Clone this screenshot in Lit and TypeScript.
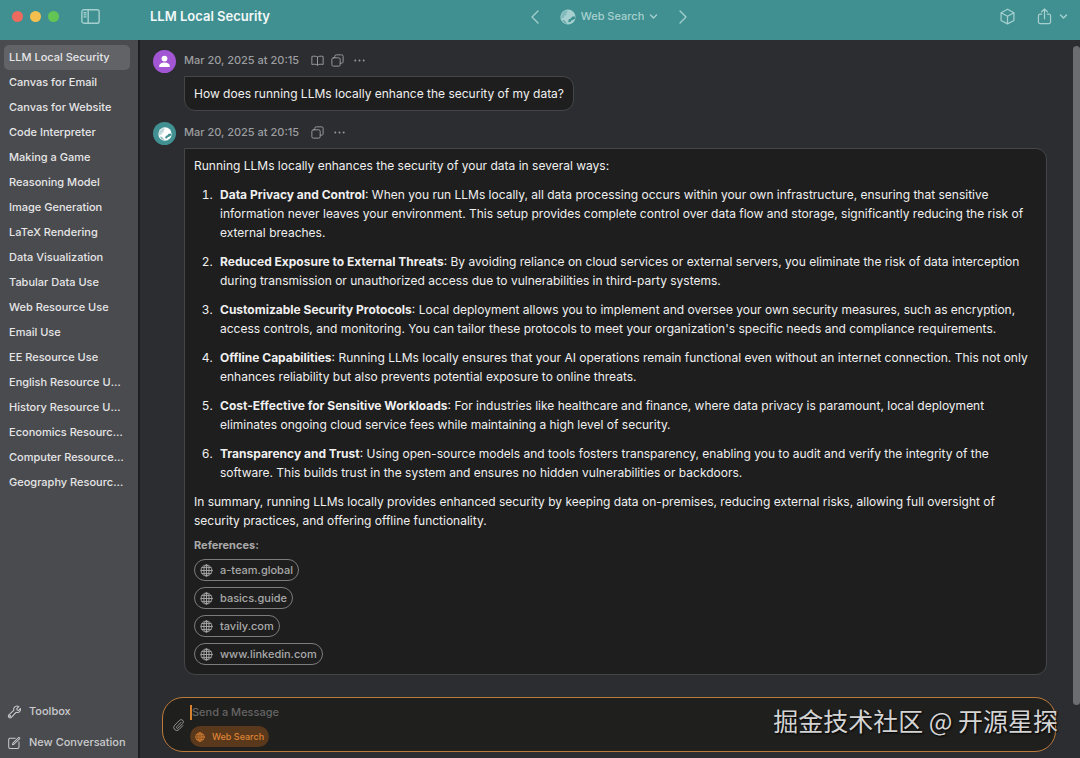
import { LitElement, html, css, svg, nothing } from "lit";
import { customElement, property, state } from "lit/decorators.js";
import { classMap } from "lit/directives/class-map.js";

const CHATS = [
  "LLM Local Security",
  "Canvas for Email",
  "Canvas for Website",
  "Code Interpreter",
  "Making a Game",
  "Reasoning Model",
  "Image Generation",
  "LaTeX Rendering",
  "Data Visualization",
  "Tabular Data Use",
  "Web Resource Use",
  "Email Use",
  "EE Resource Use",
  "English Resource Usage",
  "History Resource Usage",
  "Economics Resource Usage",
  "Computer Resource Usage",
  "Geography Resource Usage",
];

const POINTS = [
  {
    title: "Data Privacy and Control",
    text: "When you run LLMs locally, all data processing occurs within your own infrastructure, ensuring that sensitive information never leaves your environment. This setup provides complete control over data flow and storage, significantly reducing the risk of external breaches.",
  },
  {
    title: "Reduced Exposure to External Threats",
    text: "By avoiding reliance on cloud services or external servers, you eliminate the risk of data interception during transmission or unauthorized access due to vulnerabilities in third-party systems.",
  },
  {
    title: "Customizable Security Protocols",
    text: "Local deployment allows you to implement and oversee your own security measures, such as encryption, access controls, and monitoring. You can tailor these protocols to meet your organization's specific needs and compliance requirements.",
  },
  {
    title: "Offline Capabilities",
    text: "Running LLMs locally ensures that your AI operations remain functional even without an internet connection. This not only enhances reliability but also prevents potential exposure to online threats.",
  },
  {
    title: "Cost-Effective for Sensitive Workloads",
    text: "For industries like healthcare and finance, where data privacy is paramount, local deployment eliminates ongoing cloud service fees while maintaining a high level of security.",
  },
  {
    title: "Transparency and Trust",
    text: "Using open-source models and tools fosters transparency, enabling you to audit and verify the integrity of the software. This builds trust in the system and ensures no hidden vulnerabilities or backdoors.",
  },
];

const REFERENCES = ["a-team.global", "basics.guide", "tavily.com", "www.linkedin.com"];

const GLYPHS = {
  sidebar: svg`<rect x=".8" y="2.600" width="16.400" height="12.800" rx="2"/><path d="M6.800 2.600v12.800M2.900 5.400h1.900M2.900 7.400h1.900M2.900 9.400h1.900"/>`,
  left: svg`<path d="M12 3 6 9l6 6"/>`,
  right: svg`<path d="m6 3 6 6-6 6"/>`,
  down: svg`<path stroke-width="2.800" d="m3 6 6 6 6-6"/>`,
  cube: svg`<path d="M9 1.300 15.800 5v8.200L9 16.800 2.200 13.200V5zM2.200 5 9 8.800 15.800 5M9 8.800v8"/>`,
  share: svg`<path d="M6 6.500H4.200a1.600 1.600 0 0 0-1.600 1.600v6.800a1.600 1.600 0 0 0 1.600 1.600h9.600a1.600 1.600 0 0 0 1.600-1.600V8.100a1.600 1.600 0 0 0-1.600-1.600H12M9 11.500V1.300M6 4l3-2.900L12 4"/>`,
  book: svg`<path d="M9 4.300C7.600 2.900 4.300 2.600 1.200 3.400v11.200c3-.8 6.400-.5 7.800.9 1.400-1.400 4.800-1.700 7.800-.9V3.400C13.700 2.600 10.400 2.900 9 4.300zM9 4.300v11.200"/>`,
  copy: svg`<rect x="1.200" y="5.300" width="11.500" height="11.500" rx="2"/><path d="M5.300 5.200V3.200a2 2 0 0 1 2-2h7.500a2 2 0 0 1 2 2v7.500a2 2 0 0 1-2 2h-2"/>`,
  dots: svg`<g fill="currentColor" stroke="none"><circle cx="3.200" cy="9" r="1.300"/><circle cx="9" cy="9" r="1.300"/><circle cx="14.800" cy="9" r="1.300"/></g>`,
  web: svg`<circle cx="9" cy="9" r="7.600"/><ellipse cx="9" cy="9" rx="3.600" ry="7.600"/><path d="M9 1.400v15.200M1.400 9h15.200M2.700 5h12.600M2.700 13h12.600"/>`,
  wrench: svg`<path d="M15.300 2.100 12.500 4.800l.7 1.700 1.700.6 2.300-2.600c.7 2.500-.9 5.200-3.800 5.200-.8 0-1.300-.1-1.800-.3l-6 6.500a2.200 2.200 0 0 1-3.200-3.200l6.500-6C7.900 4 10 1.300 12.900 1.300c.9 0 1.700.3 2.400.8z"/><circle cx="4" cy="14.200" r=".7"/>`,
  compose: svg`<path d="M10.500 2.800H4a1.800 1.800 0 0 0-1.800 1.800v9.600A1.800 1.800 0 0 0 4 16h9.600a1.800 1.800 0 0 0 1.800-1.800V7.500M7 11.200l.6-2 7.600-7.600 1.400 1.400L9 10.600z"/>`,
  clip: svg`<path d="m12.500 6-5.900 6.100a1.300 1.300 0 0 0 1.900 1.900l6.300-6.500a3 3 0 0 0-4.300-4.300L3.700 10a4.200 4.200 0 0 0 6 6l5.400-5.500"/>`,
};

const icon = (name: keyof typeof GLYPHS, size = 14) => html`
  <svg width=${size} height=${size} viewBox="0 0 18 18" fill="none" stroke="currentColor"
    stroke-width="1.300" stroke-linecap="round" stroke-linejoin="round" aria-hidden="true">
    ${GLYPHS[name]}
  </svg>`;

/* Solid globe whose oceans show the colour behind it. */
const globe = (size: number, sea: string) => html`
  <svg width=${size} height=${size} viewBox="0 0 16 16" aria-hidden="true">
    <circle cx="8" cy="8" r="7.600" fill="currentColor"/>
    <path fill=${sea} opacity=".35" d="M1.200 9.500C.6 5.600 3 2 6.500 1.200l1.300 1.600-1.600 1.400.6 1.500-2.300 1.100-.4 1.700z"/>
    <path fill=${sea} d="M14.700 7.300l-2.600.5-1.300 1.700-1.800.8-.9 1.600.8 1.300 1.700-.3.6-1.500 1.700-.4 1.300-1.100.9.2c.2-.9.100-1.900-.4-2.800z"/>
    <path fill=${sea} d="M2.100 10.800l2 .4 1.600 1.500 1.500 2.200C4.800 14.600 2.900 13 2.100 10.800z" opacity=".6"/>
  </svg>`;

@customElement("chat-sidebar")
class ChatSidebar extends LitElement {
  @property({ type: Number }) selected = 0;

  static styles = css`
    :host {
      display: flex;
      flex-direction: column;
      justify-content: space-between;
      box-sizing: border-box;
      padding: 5px 8px 0 4px;
      background: #4a4b4f;
      border-right: 2px solid #1d1e20;
      color: #e6e6e7;
      font-size: 11px;
      font-weight: 500;
      min-height: 0;
    }
    ul { list-style: none; margin: 0; padding: 0; overflow: hidden; }
    button {
      display: block;
      width: 100%;
      border: 0;
      padding: 0 6px 0 5px;
      background: none;
      color: inherit;
      font: inherit;
      line-height: 25px;
      border-radius: 5px;
      text-align: left;
      white-space: nowrap;
      overflow: hidden;
      text-overflow: ellipsis;
    }
    .selected { background: #626367; }
    .tools { display: flex; flex-direction: column; color: #cbcbcd; }
    .tools button { display: flex; align-items: center; gap: 8px; padding: 3px; overflow: visible; }
    svg { flex: none; }
  `;

  private pick(i: number) {
    this.dispatchEvent(new CustomEvent("pick", { detail: i }));
  }

  render() {
    return html`
      <ul>
        ${CHATS.map((c, i) => html`<li>
          <button class=${classMap({ selected: i === this.selected })} @click=${() => this.pick(i)}>${c}</button>
        </li>`)}
      </ul>
      <div class="tools">
        <button>${icon("wrench")} Toolbox</button>
        <button>${icon("compose")} New Conversation</button>
      </div>`;
  }
}

@customElement("chat-message")
class ChatMessage extends LitElement {
  @property() role: "user" | "assistant" | null = "user";
  @property() time = "";

  static styles = css`
    :host { display: flex; gap: 8px; align-items: flex-start; }
    .avatar {
      flex: none;
      display: grid;
      place-items: center;
      width: 23px;
      height: 23px;
      border-radius: 50%;
      background: #a256d3;
      color: #fff;
    }
    .assistant { background: #419092; }
    .body { flex: 1; min-width: 0; display: flex; flex-direction: column; align-items: flex-start; gap: 5px; }
    .meta {
      display: flex;
      align-items: center;
      gap: 7px;
      height: 21px;
      color: #9d9ea0;
      font-size: 11px;
      font-weight: 500;
    }
    button { display: flex; padding: 0; border: 0; background: none; color: inherit; }
    .meta span { margin-right: 5px; }
    .more { margin-left: 2px; }
    .bubble {
      box-sizing: border-box;
      padding: 7px 9px;
      border: 1px solid #454649;
      border-radius: 0 11px 11px 11px;
      background: #1e1e1e;
      color: #f0f0f0;
      line-height: 19px;
    }
  `;

  render() {
    const user = this.role === "user";
    return html`
      <div class="avatar ${this.role}">
        ${user
          ? html`<svg width="13" height="13" viewBox="0 0 13 13" fill="currentColor" aria-hidden="true">
              <circle cx="6.500" cy="3.600" r="2.900"/><path d="M1.200 12V11c0-2.200 2.300-3.500 5.300-3.500s5.300 1.300 5.300 3.500v1z"/></svg>`
          : globe(14, "#419092")}
      </div>
      <div class="body">
        <div class="meta">
          <span>${this.time}</span>
          ${user ? html`<button aria-label="Read">${icon("book", 13)}</button>` : nothing}
          <button aria-label="Copy">${icon("copy", 13)}</button>
          <button class="more" aria-label="More">${icon("dots", 13)}</button>
        </div>
        <div class="bubble"><slot></slot></div>
      </div>`;
  }
}

@customElement("message-composer")
class MessageComposer extends LitElement {
  static styles = css`
    :host {
      display: flex;
      align-items: center;
      gap: 5px;
      box-sizing: border-box;
      padding: 4px 9px;
      border: 1px solid #bd7b3b;
      border-radius: 21px;
      background: #1f1f1e;
      font-size: 11px;
      font-weight: 500;
    }
    button { display: flex; align-items: center; padding: 0; border: 0; background: none; color: #9b9b9b; font: inherit; }
    .field { flex: 1; display: flex; flex-direction: column; align-items: flex-start; gap: 4px; }
    .entry { display: flex; align-items: center; width: 100%; }
    .caret { width: 2px; height: 15px; background: #d8812f; }
    input {
      flex: 1;
      padding: 0;
      border: 0;
      outline: 0;
      background: none;
      color: #ececec;
      font: inherit;
      line-height: 20px;
    }
    input::placeholder { color: #646464; opacity: 1; }
    .tool {
      gap: 7px;
      padding: 0 5px;
      height: 21px;
      border-radius: 11px;
      background: #5a381c;
      color: #dd8434;
      font-size: 9px;
    }
  `;

  render() {
    return html`
      <button aria-label="Attach file">${icon("clip", 13)}</button>
      <div class="field">
        <div class="entry">
          <span class="caret"></span>
          <input aria-label="Message" placeholder="Send a Message" />
        </div>
        <button class="tool">${icon("web", 10)} Web Search</button>
      </div>`;
  }
}

@customElement("app-root")
class AppRoot extends LitElement {
  @state() private current = 0;

  static styles = css`
    :host {
      position: relative;
      display: grid;
      grid-template: 40px minmax(0, 1fr) / 140px minmax(0, 1fr);
      height: 100vh;
      overflow: hidden;
      background: #2b2d30;
      font: 12px/19px Inter, "Noto Sans CJK SC", sans-serif;
    }
    header {
      grid-column: 1 / -1;
      display: grid;
      grid-template-columns: 138px 1fr auto 1fr;
      align-items: center;
      padding: 0 12px 7px 12px;
      box-sizing: border-box;
      background: #409091;
      color: #a6d0d0;
    }
    header button { display: flex; align-items: center; padding: 0; border: 0; background: none; color: inherit; }
    .window { display: flex; align-items: center; gap: 7px; }
    .light { width: 11px; height: 11px; border-radius: 50%; background: #ed6a5f; }
    .light.min { background: #f5bf4f; }
    .light.max { background: #62c554; }
    .toggle { margin-left: 15px; }
    h1 { margin: 0; font-size: 13px; font-weight: 600; color: #f2f8f8; }
    .model { display: flex; align-items: center; gap: 16px; font-size: 11px; font-weight: 500; }
    .picker { display: flex; align-items: center; gap: 5px; }
    select {
      appearance: none;
      field-sizing: content;
      padding: 0;
      border: 0;
      background: none;
      color: inherit;
      font: inherit;
    }
    .actions { display: flex; align-items: center; justify-content: flex-end; gap: 20px; }
    .share { gap: 6px; }
    main { display: flex; flex-direction: column; min-height: 0; padding: 0 24px 6px 13px; }
    .thread { flex: 1; min-height: 0; overflow: hidden; display: flex; flex-direction: column; gap: 11px; padding: 10px 9px 0 0; }
    message-composer { margin-left: 9px; }
    p { margin: 0; }
    .answer { display: flex; flex-direction: column; gap: 10px; }
    ol { display: flex; flex-direction: column; gap: 10px; margin: 0; padding: 0 0 0 22px; }
    li { padding-left: 4px; }
    strong { font-weight: 700; }
    .refs {
      display: flex;
      flex-direction: column;
      align-items: flex-start;
      gap: 6px;
      margin-top: -2px;
      padding-bottom: 2px;
      color: #a9a9a9;
      font-size: 11px;
      font-weight: 500;
    }
    .refs h2 { margin: 0; font-size: 11px; line-height: 15px; font-weight: 700; }
    .refs a {
      display: flex;
      align-items: center;
      gap: 7px;
      box-sizing: border-box;
      height: 22px;
      padding: 0 5px;
      border: 1px solid #7c7c7c;
      border-radius: 11px;
      color: inherit;
      text-decoration: none;
    }
    .scroll {
      position: absolute;
      top: 46px;
      right: 0;
      bottom: 53px;
      width: 7px;
      border-radius: 4px;
      background: #6c6d70;
    }
    .watermark {
      position: absolute;
      right: 22px;
      bottom: 20px;
      color: #d4d4d4;
      font: 25px/36px "Noto Sans CJK SC", sans-serif;
      text-shadow: 1px 1px 2px #000;
      pointer-events: none;
    }
  `;

  render() {
    return html`
      <header>
        <div class="window">
          <span class="light"></span><span class="light min"></span><span class="light max"></span>
          <button class="toggle" aria-label="Toggle sidebar">${icon("sidebar", 19)}</button>
        </div>
        <h1>${CHATS[this.current]}</h1>
        <div class="model">
          <button aria-label="Previous">${icon("left", 18)}</button>
          <label class="picker">
            ${globe(16, "#409091")}
            <select aria-label="Assistant"><option>Web Search</option></select>
            ${icon("down", 9)}
          </label>
          <button aria-label="Next">${icon("right", 18)}</button>
        </div>
        <div class="actions">
          <button aria-label="Artifacts">${icon("cube", 17)}</button>
          <button class="share" aria-label="Share">${icon("share", 17)}${icon("down", 9)}</button>
        </div>
      </header>
      <chat-sidebar .selected=${this.current} @pick=${(e: CustomEvent) => (this.current = e.detail)}></chat-sidebar>
      <main>
        <div class="thread">
          <chat-message role="user" time="Mar 20, 2025 at 20:15">How does running LLMs locally enhance the security of my data?</chat-message>
          <chat-message role="assistant" time="Mar 20, 2025 at 20:15">
            <div class="answer">
              <p>Running LLMs locally enhances the security of your data in several ways:</p>
              <ol>${POINTS.map((p) => html`<li><strong>${p.title}</strong>: ${p.text}</li>`)}</ol>
              <p>In summary, running LLMs locally provides enhanced security by keeping data on-premises, reducing external risks, allowing full oversight of security practices, and offering offline functionality.</p>
              <div class="refs">
                <h2>References:</h2>
                ${REFERENCES.map((r) => html`<a href="#${r}">${icon("web", 13)}${r}</a>`)}
              </div>
            </div>
          </chat-message>
        </div>
        <message-composer></message-composer>
      </main>
      <div class="scroll"></div>
      <div class="watermark">掘金技术社区 @ 开源星探</div>`;
  }
}
